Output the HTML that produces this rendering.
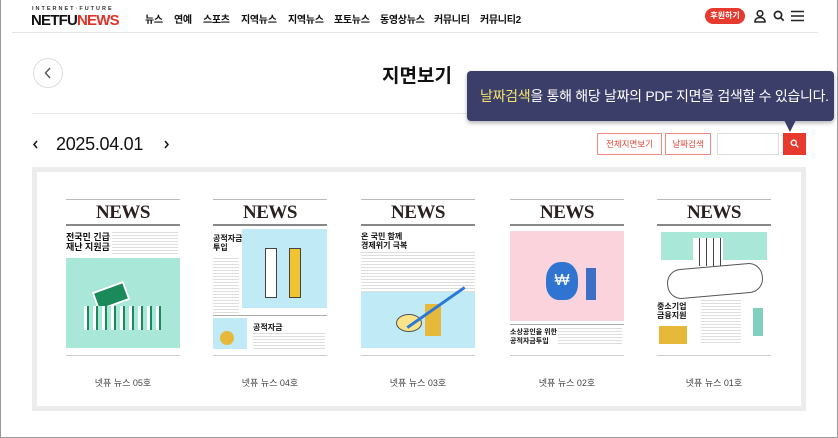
<!DOCTYPE html>
<html><head><meta charset="utf-8"><style>
*{margin:0;padding:0;box-sizing:border-box}
body{width:838px;height:438px;overflow:hidden;background:#fff;font-family:"Liberation Sans","Noto Sans CJK KR",sans-serif;position:relative;color:#111}
.frame{position:absolute;left:0;top:0;width:838px;height:438px;border:1px solid #9a9a9a;border-top:none}
.a{position:absolute}
.nav span{position:absolute;top:11px;font-size:10px;font-weight:700;letter-spacing:-0.3px}
.btn{position:absolute;top:133px;height:22px;border:1px solid #f08a80;color:#e2483b;font-size:8.5px;display:flex;align-items:center;justify-content:center;background:#fff}
.card{position:absolute;top:196px;width:114px;height:160px;background:#fff}
.card .hd{position:absolute;left:0;top:0;width:114px;height:30px;border-bottom:2px solid #888}
.card .hd:before{content:"";position:absolute;left:0;right:0;top:3px;border-top:1px solid #bbb}
.card .nw{position:absolute;left:0;right:0;top:6px;text-align:center;font-family:"Liberation Serif",serif;font-weight:700;font-size:19px;color:#2a2020;letter-spacing:-0.5px}
.txt{position:absolute;background:repeating-linear-gradient(#ddd 0 1px,#fff 1px 3px)}
.cap{position:absolute;top:376px;width:114px;text-align:center;font-size:9px;color:#444}
.bl{position:absolute;bottom:0;left:0;right:0;border-bottom:1px solid #ccc}
</style></head><body>
<div class="frame"></div>
<div class="a" style="left:32px;top:6px;font-size:5.5px;letter-spacing:2px;font-weight:700;color:#333">INTERNET·FUTURE</div>
<div class="a" style="left:31px;top:12px;font-size:15px;font-weight:700;letter-spacing:-0.8px;color:#111">NETFU<span style="color:#e2332a">NEWS</span></div>
<div class="nav">
<span style="left:145px">뉴스</span><span style="left:174px">연예</span><span style="left:203px">스포츠</span><span style="left:241px">지역뉴스</span><span style="left:288px">지역뉴스</span><span style="left:334px">포토뉴스</span><span style="left:380px">동영상뉴스</span><span style="left:434px">커뮤니티</span><span style="left:480px">커뮤니티2</span>
</div>
<div class="a" style="left:705px;top:8px;width:40px;height:16px;border-radius:8px;background:#e8392e;color:#fff;font-size:8px;font-weight:700;text-align:center;line-height:16px">후원하기</div>
<svg class="a" style="left:753px;top:9px" width="14" height="14" viewBox="0 0 14 14" fill="none" stroke="#222" stroke-width="1.6"><circle cx="7" cy="4.5" r="2.8"/><path d="M2 13c0-3 2.2-4.5 5-4.5s5 1.5 5 4.5z"/></svg>
<svg class="a" style="left:773px;top:10px" width="12" height="12" viewBox="0 0 12 12" fill="none" stroke="#222" stroke-width="1.7"><circle cx="5" cy="5" r="3.6"/><path d="M7.7 7.7l3 3"/></svg>
<svg class="a" style="left:791px;top:10px" width="13" height="12" viewBox="0 0 13 12" stroke="#222" stroke-width="1.6"><path d="M0 1.5h13M0 6h13M0 10.5h13"/></svg>
<div class="a" style="left:12px;top:32px;width:806px;border-top:1px solid #e4e4e4"></div>
<div class="a" style="left:33px;top:58px;width:30px;height:30px;border-radius:50%;border:1px solid #ddd"></div>
<svg class="a" style="left:43px;top:67px" width="10" height="12" viewBox="0 0 10 12" fill="none" stroke="#555" stroke-width="1.4"><path d="M7 1L2.5 6 7 11"/></svg>
<div class="a" style="left:382px;top:61px;font-size:19px;font-weight:700">지면보기</div>
<div class="a" style="left:32px;top:113px;width:774px;border-top:1px solid #e6e6e6"></div>
<div class="a" style="left:467px;top:71px;width:367px;height:50px;background:#3c3e6a;border-radius:4px;box-shadow:0 2px 4px rgba(0,0,0,.3);color:#fff;font-size:14px;line-height:50px;padding-left:13px;letter-spacing:-0.3px;white-space:nowrap"><span style="color:#f3e36b">날짜검색</span>을 통해 해당 날짜의 PDF 지면을 검색할 수 있습니다.</div>
<div class="a" style="left:784px;top:120px;width:0;height:0;border-left:6px solid transparent;border-right:6px solid transparent;border-top:12px solid #3c3e6a"></div>
<svg class="a" style="left:32px;top:140px" width="7" height="9" viewBox="0 0 7 9" fill="none" stroke="#111" stroke-width="1.5"><path d="M5 1L2 4.5 5 8"/></svg>
<div class="a" style="left:56px;top:134px;font-size:18px;letter-spacing:-0.3px">2025.04.01</div>
<svg class="a" style="left:163px;top:140px" width="7" height="9" viewBox="0 0 7 9" fill="none" stroke="#111" stroke-width="1.5"><path d="M2 1l3 3.5L2 8"/></svg>
<div class="btn" style="left:597px;width:65px">전체지면보기</div>
<div class="btn" style="left:665px;width:46px">날짜검색</div>
<div class="a" style="left:717px;top:133px;width:62px;height:22px;border:1px solid #ddd"></div>
<div class="a" style="left:783px;top:133px;width:23px;height:22px;background:#e8392e"></div>
<svg class="a" style="left:790px;top:139px" width="9" height="9" viewBox="0 0 9 9" fill="none" stroke="#fff" stroke-width="1.3"><circle cx="3.8" cy="3.8" r="2.6"/><path d="M5.8 5.8l2.5 2.5"/></svg>
<div class="a" style="left:32px;top:167px;width:774px;height:244px;border:5px solid #ececec"></div>

<div class="card" style="left:66px"><div class="hd"><div class="nw">NEWS</div></div>
<div class="a" style="left:0;top:36px;font-size:9px;font-weight:700;line-height:10px">전국민 긴급<br>재난 지원금</div>
<div class="txt" style="left:46px;top:36px;width:66px;height:22px"></div>
<div class="a" style="left:0;top:62px;width:114px;height:90px;background:#a9e8d8"></div>
<div class="a" style="left:28px;top:90px;width:34px;height:20px;background:#1b8a5a;transform:rotate(-20deg);border:2px solid #fff"></div>
<div class="a" style="left:18px;top:110px;width:80px;height:24px;background:repeating-linear-gradient(90deg,#fff 0 3px,#1b8a5a 3px 5px,#a9e8d8 5px 9px)"></div>
<div class="bl"></div></div>

<div class="card" style="left:213px"><div class="hd"><div class="nw">NEWS</div></div>
<div class="a" style="left:0;top:38px;font-size:8px;font-weight:700;line-height:9px">공적자금<br>투입</div>
<div class="txt" style="left:0;top:62px;width:26px;height:70px"></div>
<div class="a" style="left:29px;top:33px;width:85px;height:79px;background:#bfeaf6"></div>
<div class="a" style="left:52px;top:52px;width:12px;height:50px;background:#fff;border:1px solid #444"></div>
<div class="a" style="left:76px;top:52px;width:12px;height:50px;background:#f1c232;border:1px solid #444"></div>
<div class="a" style="left:0;top:119px;width:114px;border-top:1px solid #aaa"></div>
<div class="a" style="left:0;top:122px;width:34px;height:31px;background:#bfeaf6"></div>
<div class="a" style="left:7px;top:135px;width:14px;height:14px;border-radius:50%;background:#e6b93a"></div>
<div class="a" style="left:40px;top:126px;font-size:8px;font-weight:700">공적자금</div>
<div class="txt" style="left:40px;top:137px;width:72px;height:16px"></div>
<div class="bl"></div></div>

<div class="card" style="left:361px"><div class="hd"><div class="nw">NEWS</div></div>
<div class="a" style="left:0;top:36px;font-size:8px;font-weight:700;line-height:9px">온 국민 함께<br>경제위기 극복</div>
<div class="txt" style="left:0;top:56px;width:114px;height:40px"></div>
<div class="a" style="left:0;top:96px;width:114px;height:56px;background:#bfeaf6"></div>
<div class="a" style="left:35px;top:118px;width:26px;height:18px;border-radius:50%;background:#fbe38a;border:1px solid #555"></div>
<div class="a" style="left:64px;top:108px;width:16px;height:32px;background:#e6b93a"></div>
<div class="a" style="left:40px;top:110px;width:70px;border-top:3px solid #2a78d8;transform:rotate(-35deg)"></div>
<div class="bl"></div></div>

<div class="card" style="left:510px"><div class="hd"><div class="nw">NEWS</div></div>
<div class="a" style="left:0;top:35px;width:114px;height:90px;background:#fbd3dd"></div>
<div class="a" style="left:36px;top:66px;width:32px;height:38px;border-radius:45% 45% 40% 40%;background:#2f74d0;color:#fff;text-align:center;font-size:16px;line-height:38px">₩</div>
<div class="a" style="left:76px;top:72px;width:10px;height:32px;background:#3d6fc7"></div>
<div class="a" style="left:0;top:128px;width:114px;border-top:1px solid #aaa"></div>
<div class="a" style="left:0;top:132px;font-size:7px;font-weight:700;line-height:9px">소상공인을 위한<br>공적자금투입</div>
<div class="txt" style="left:48px;top:132px;width:64px;height:18px"></div>
<div class="bl"></div></div>

<div class="card" style="left:657px"><div class="hd"><div class="nw">NEWS</div></div>
<div class="a" style="left:4px;top:36px;width:106px;height:28px;background:#a9e8d8"></div>
<div class="a" style="left:36px;top:42px;width:30px;height:28px;background:repeating-linear-gradient(90deg,#fff 0 6px,#444 6px 7px)"></div>
<div class="a" style="left:10px;top:70px;width:96px;height:30px;border:1px solid #555;border-radius:14px;transform:rotate(-5deg)"></div>
<div class="a" style="left:0;top:106px;font-size:8px;font-weight:700;line-height:9px">중소기업<br>금융지원</div>
<div class="txt" style="left:44px;top:104px;width:40px;height:44px"></div>
<div class="a" style="left:2px;top:130px;width:28px;height:18px;background:#e6b93a"></div>
<div class="a" style="left:96px;top:112px;width:10px;height:28px;background:#7fd1bd"></div>
<div class="bl"></div></div>

<div class="cap" style="left:66px">넷퓨 뉴스 05호</div>
<div class="cap" style="left:213px">넷퓨 뉴스 04호</div>
<div class="cap" style="left:361px">넷퓨 뉴스 03호</div>
<div class="cap" style="left:510px">넷퓨 뉴스 02호</div>
<div class="cap" style="left:657px">넷퓨 뉴스 01호</div>
</body></html>
